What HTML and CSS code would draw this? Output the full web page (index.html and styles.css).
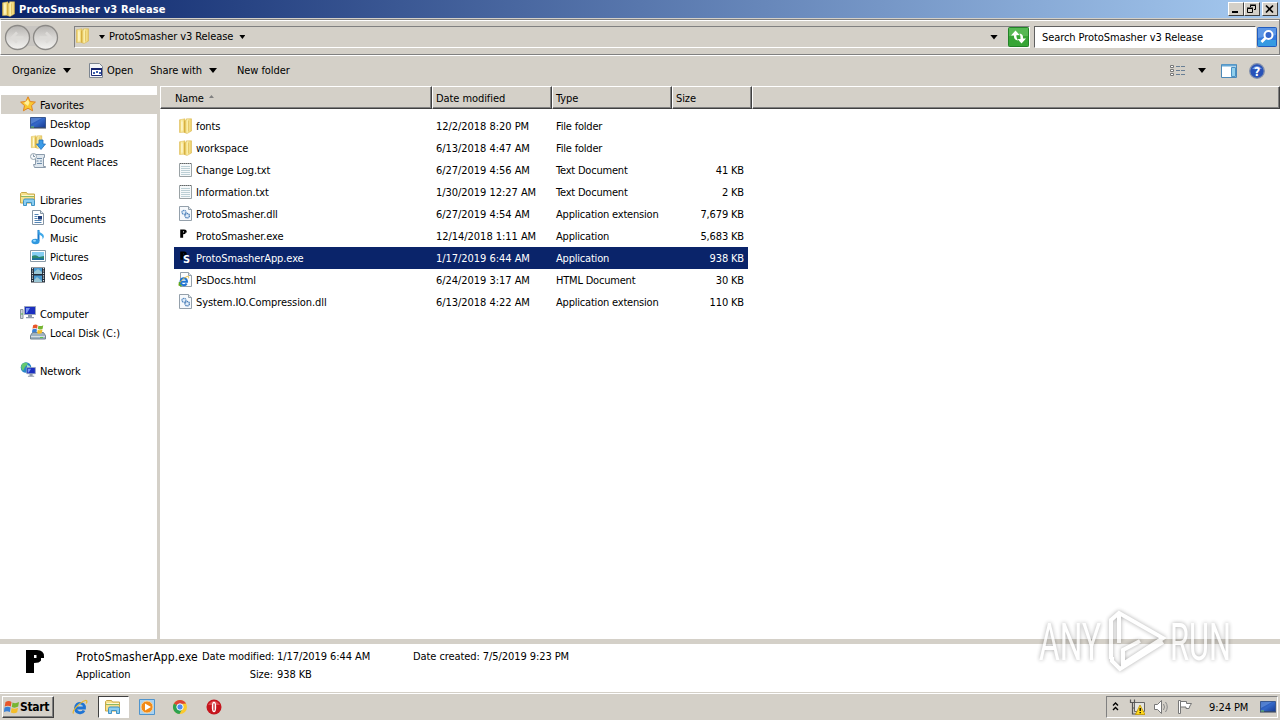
FILE: index.html
```
<!DOCTYPE html>
<html lang="en">
<head>
    <meta charset="UTF-8">
    <meta name="viewport" content="width=device-width, initial-scale=1.0">
    <link rel="stylesheet" href="styles.css">
    <title>ProtoSmasher v3 Release</title>
</head>
<body>
    <!-- shared icons -->
    <svg class="sprite" width="0" height="0">
        <defs>
            <linearGradient id="gold" x1="0" x2="1" y1="0" y2="0">
                <stop offset="0" stop-color="#e6c355"/>
                <stop offset=".4" stop-color="#fbf0ac"/>
                <stop offset="1" stop-color="#ebcb62"/>
            </linearGradient>
            <linearGradient id="screen" x1="0" x2="1" y1="0" y2="1">
                <stop offset="0" stop-color="#1c3d9c"/>
                <stop offset=".5" stop-color="#3468c8"/>
                <stop offset="1" stop-color="#173a90"/>
            </linearGradient>
            <linearGradient id="glass" x1="0" x2="0" y1="0" y2="1">
                <stop offset="0" stop-color="#b5b3b0"/>
                <stop offset=".45" stop-color="#d6d4d1"/>
                <stop offset="1" stop-color="#f4f3f1"/>
            </linearGradient>
        </defs>
        <symbol id="folder" viewBox="0 0 16 16">
            <path d="M1.500 1.800L7 .8v13.400l-5.500.3z" fill="url(#gold)" stroke="#dcb94f" stroke-width=".5"/>
            <path d="M6.500 2.500l2-.5V.8h5V13L9 15.500l-2.500-1z" fill="url(#gold)" stroke="#d5b045" stroke-width=".5"/>
            <path d="M6.800 3v11.500" stroke="#cfa433" stroke-width=".7"/>
            <path d="M10.500 2.500v11" stroke="#d8b34a" stroke-width=".6"/>
            <path d="M4 3.500v9" stroke="#fffade"/>
        </symbol>
        <symbol id="txt" viewBox="0 0 16 16">
            <path d="M1.500 1.500h12v13h-12z" fill="#f6f9fa" stroke="#9aa2a5"/>
            <path d="M2 1.500h11" stroke="#666" stroke-dasharray="1 1"/>
            <path d="M3 4.500h9M3 6.500h9M3 8.500h9M3 10.500h9M3 12.500h9" stroke="#bccfd5"/>
        </symbol>
        <symbol id="dll" viewBox="0 0 16 16">
            <path d="M1.500.5h9l3 3v11h-12z" fill="#f6f9fc" stroke="#94a0ab"/>
            <path d="M10.500.5v3h3" fill="#dde5ec" stroke="#94a0ab"/>
            <circle cx="6" cy="6.300" r="2" fill="#e2eefa" stroke="#5a8cc2" stroke-width="1.300" stroke-dasharray="1.300 .5"/>
            <circle cx="9.200" cy="9.700" r="2.200" fill="#e2eefa" stroke="#4b7db5" stroke-width="1.300" stroke-dasharray="1.300 .5"/>
        </symbol>
        <symbol id="ie" viewBox="0 0 16 16">
            <path d="M4 9h8.500c.3-6-8.500-6.500-9 0-.2 5.500 6.800 6 8.500 2.500" fill="none" stroke="#1f74d4" stroke-width="2.800"/>
            <path d="M5 7.500c1-2.500 4-2.500 5.500-.5" fill="none" stroke="#7cc6f7" stroke-width=".8"/>
            <path d="M1.500 14.500C-.5 12 8 3 13.500 1.500c2-.3 1.500 2 .7 3" fill="none" stroke="#e9b62a" stroke-width="1.200"/>
        </symbol>
        <symbol id="html" viewBox="0 0 16 16">
            <path d="M2.500.5h8l3 3v11h-11z" fill="#fbfcfd" stroke="#94a0ab"/>
            <path d="M10.500.5v3h3" fill="#dde5ec" stroke="#94a0ab"/>
            <use href="#ie" x="0" y="3" width="11.500" height="12"/>
            <path d="M1.500 10v3l2 1" fill="none" stroke="#55a729" stroke-width="1.500"/>
        </symbol>
        <symbol id="p" viewBox="0 0 22 26">
            <path d="M2 2h11q7 0 7 6.500v1.500l-3 0v2.500q-1.500 2.500-7 2.500v10H2zM10 7v3h2.500V7z" fill="#000" fill-rule="evenodd"/>
        </symbol>
        <symbol id="desktop" viewBox="0 0 16 16">
            <path d="M.5 2.500h15v10H.5z" fill="url(#screen)" stroke="#3a5990"/>
            <path d="M1 3h11L1 9z" fill="#6f9fe2" opacity=".6"/>
            <path d="M0 13h16" stroke="#2e3d54"/>
            <path d="M1 12h3" stroke="#6cc45c"/>
        </symbol>
        <symbol id="libs" viewBox="0 0 16 16">
            <path d="M.5 12V2.500l1-1h5l1 1.500h7V12z" fill="#f7e08a" stroke="#c8a849"/>
            <path d="M2 4.500h12" stroke="#fff8d0"/>
            <path d="M1 5.500h13" stroke="#8eb765"/>
            <path d="M3.500 14.500v-5q0-1.500 1.500-1.500h8q1.500 0 1.500 1.500v5h-3v-3h-5v3z" fill="#8bcdf1" stroke="#3f93c4"/>
        </symbol>
        <symbol id="monitor" viewBox="0 0 16 16">
            <path d="M4.500 2.500h11v8h-11z" fill="#1b2fc0" stroke="#99a5bb"/>
            <path d="M6 4h4l-3 5H6z" fill="#7894f2"/>
            <path d="M8 11h4v2H8zM6 13h8v1.300H6z" fill="#8f9aac"/>
        </symbol>
        <symbol id="winflag" viewBox="0 0 16 16">
            <path d="M1.500 3Q5 1 7.500 3L6.800 7.500Q4 5.800.7 7.500z" fill="#e8562a"/>
            <path d="M8.500 3.500q3 1.500 6.500-.5l-.8 4.500q-3.200 2-6.400.5z" fill="#76b531"/>
            <path d="M.5 8.500q3.300-1.700 6.100 0l-.7 4.500q-2.800-1.700-6 0z" fill="#3a80d5"/>
            <path d="M7.600 9q3 1.700 6.400-.3l-.8 4.500q-3 1.900-6.300.3z" fill="#f4bd29"/>
        </symbol>
    </svg>

    <div class="window">
        <div class="titlebar">
            <svg class="icon"><use href="#folder"/></svg>
            <h1>ProtoSmasher v3 Release</h1>
            <div class="win-buttons">
                <button><svg width="14" height="12"><path d="M3 9h6" stroke="#000" stroke-width="2"/></svg></button>
                <button><svg width="14" height="12"><path d="M5.500 4V2.500h5v4H9M5 2h6M2.500 5.500h5v4h-5zM2 5h6" fill="none" stroke="#000"/></svg></button>
                <button class="close"><svg width="14" height="12"><path d="M3 2.500l7 7M10 2.500l-7 7" stroke="#000" stroke-width="1.700"/></svg></button>
            </div>
        </div>

        <div class="navbar">
            <svg class="travel" width="58" height="28">
                <rect x="12" y="3" width="32" height="20" fill="#c9c6c2"/>
                <circle cx="14.500" cy="14.500" r="12" fill="url(#glass)" stroke="#8b8986" stroke-width="1.300"/>
                <circle cx="42.500" cy="14.500" r="12" fill="url(#glass)" stroke="#8b8986" stroke-width="1.300"/>
                <path d="M20.500 14.500h-11M14 9.500l-5 5 5 5" fill="none" stroke="#dddbd8" stroke-width="2.500"/>
                <path d="M36.500 14.500h11M43 9.500l5 5-5 5" fill="none" stroke="#dddbd8" stroke-width="2.500"/>
            </svg>
            <div class="address">
                <svg class="icon"><use href="#folder"/></svg>
                <i class="arrow small"></i>
                <span>ProtoSmasher v3 Release</span>
                <i class="arrow small"></i>
                <i class="arrow drop"></i>
                <svg class="refresh" width="21" height="20">
                    <rect x=".5" y=".5" width="20" height="19" rx="1" fill="#37a536" stroke="#238328"/>
                    <path d="M1 1h19v8H1z" fill="#6ac569" opacity=".6"/>
                    <path d="M10 13.500Q5.500 13 6 8.500H3l4.500-5 4 4.500H8.500q-.5 2.500 1.500 5.500z" fill="#fff"/>
                    <path d="M11.500 6.500q4 .5 3.500 5h3l-4.500 5-4-4.500h3q.5-2.500-1-5.500z" fill="#fff"/>
                </svg>
            </div>
            <div class="search">Search ProtoSmasher v3 Release</div>
            <svg class="search-btn" width="20" height="20">
                <rect x=".5" y=".5" width="19" height="19" rx="1" fill="#3478dc" stroke="#225cbd"/>
                <path d="M1 1h18v7L1 11z" fill="#7eaeef" opacity=".55"/>
                <path d="M1 13h18v6H1z" fill="#36b7e8" opacity=".55"/>
                <circle cx="11.500" cy="8" r="4" fill="#3566cc" stroke="#fff" stroke-width="2"/>
                <path d="M8.500 11L4.500 15" stroke="#fff" stroke-width="2.600"/>
            </svg>
        </div>

        <div class="toolbar">
            <span class="t-organize">Organize</span>
            <i class="arrow"></i>
            <svg class="icon open-icon" viewBox="0 0 16 16">
                <path d="M.5.500h10l3 3v11H.5z" fill="#f3f5f8" stroke="#7c8590"/>
                <path d="M2.500 5.500h10v7h-10z" fill="#fff" stroke="#1d2c78"/>
                <path d="M2 6h11" stroke="#16246c" stroke-width="2"/>
                <path d="M4 9h2v2H4zM7 8h2v2H7zM10 9h2v2h-2z" fill="#3b5fae"/>
            </svg>
            <span class="t-open">Open</span>
            <span class="t-share">Share with</span>
            <i class="arrow"></i>
            <span class="t-new">New folder</span>
            <div class="tools">
                <svg width="16" height="14"><path d="M.5 1.500h3v2h-3zM.5 5.500h3v2h-3zM.5 9.500h3v2h-3z" fill="#fff" stroke="#777"/><path d="M6 2.500h4M11 2.500h4M6 6.500h4M11 6.500h4M6 10.500h4M11 10.500h4" stroke="#697f95"/></svg>
                <i class="arrow"></i>
                <svg class="preview" width="16" height="14"><path d="M.5.5h15v13H.5z" fill="#fff" stroke="#4b88b7"/><path d="M1 1.500h14" stroke="#65a7d5" stroke-width="2"/><path d="M10.500 3.500h4v9h-4z" fill="#91cfec" stroke="#4a91c4"/></svg>
                <svg class="help" width="16" height="16"><circle cx="8" cy="8" r="7.300" fill="#2852b8" stroke="#8290ad" stroke-width="1.300"/><path d="M3 6q5-6 10 0z" fill="#769ee7"/><text x="8" y="12.500" text-anchor="middle">?</text></svg>
            </div>
        </div>

        <div class="main">
            <ul class="sidebar">
                <li class="group active"><svg class="icon" viewBox="0 0 16 16"><path d="M8 .8l2.200 4.700 5.200.6-3.900 3.500 1.100 5.200L8 12.200l-4.600 2.600 1.100-5.200L.6 6.100l5.200-.6z" fill="#f9c832" stroke="#e08423"/><path d="M8 3.500l1.400 3.200L8 10 4 7z" fill="#fff09a"/></svg><span>Favorites</span></li>
                <li><svg class="icon"><use href="#desktop"/></svg><span>Desktop</span></li>
                <li><svg class="icon" viewBox="0 0 16 16"><use href="#folder" width="14" height="16"/><path d="M9 6h4v4h2.500L11 15.500 6.500 10H9z" fill="#3b9be7" stroke="#1f6fbd" stroke-width=".8"/></svg><span>Downloads</span></li>
                <li><svg class="icon" viewBox="0 0 16 16"><path d="M4.500 1.500h10v3h-1v9h2v1h-11l-1-3h2v-7z" fill="#e0e8ef" stroke="#8b9bab"/><path d="M7 5.500h5M6.500 8h2M10 8h2M7 10.500h5" stroke="#6e8ca8"/><circle cx="3.500" cy="3.500" r="3" fill="#f7fafc" stroke="#98a6b0"/><path d="M3.500 1.500v2H5" fill="none" stroke="#657b91" stroke-width=".8"/></svg><span>Recent Places</span></li>
                <li class="gap"></li>
                <li class="group"><svg class="icon"><use href="#libs"/></svg><span>Libraries</span></li>
                <li><svg class="icon" viewBox="0 0 16 16"><path d="M2.500.5h8l3 3v11h-11z" fill="#fff" stroke="#8796a5"/><path d="M10.500.5v3h3" fill="#dce5ed" stroke="#8796a5"/><path d="M4.500 4.500h4M4.500 6.500h3M4.500 8.500h3M4.500 10.500h7M4.500 12.500h7" stroke="#5485b5"/><path d="M8 6h4v3.500H8z" fill="#203f7c"/></svg><span>Documents</span></li>
                <li><svg class="icon" viewBox="0 0 16 16"><path d="M8.500 1v11" stroke="#1976c9" stroke-width="2"/><path d="M8 .5q1 3 4 4 3.500 2.500.5 6 .8-4-4-5z" fill="#3fa8e8"/><ellipse cx="5.500" cy="12.500" rx="4" ry="2.800" fill="#2f98df"/><ellipse cx="4.500" cy="11.800" rx="1.500" ry="1" fill="#9adbff"/></svg><span>Music</span></li>
                <li><svg class="icon" viewBox="0 0 16 16"><path d="M.5 2.500h15v11H.5z" fill="#fff" stroke="#8b9ba8"/><path d="M2 4h12v8H2z" fill="#86cef2"/><path d="M2 8q4-2 7 1l5-1v4H2z" fill="#2d886e"/><path d="M2 10.500q6-1 12 0V12H2z" fill="#1c6fa0"/></svg><span>Pictures</span></li>
                <li><svg class="icon" viewBox="0 0 16 16"><path d="M1 .5h14v15H1z" fill="#222c38"/><path d="M4 1h8v6H4zM4 8.500h8v6.500H4z" fill="#4b9bd2"/><path d="M4 5l4-3 4 3v2H4zM4 13l3-3 5 4v1H4z" fill="#9ac6d5"/><path d="M2.500 1v14M13.500 1v14" stroke="#dbe2e7" stroke-width="1.200" stroke-dasharray="1.200 1.200"/></svg><span>Videos</span></li>
                <li class="gap"></li>
                <li class="group"><svg class="icon" viewBox="0 0 16 16"><use href="#monitor" width="16" height="16" y="-1"/><path d="M.5 4.500h2.500v9H.5z" fill="#cfd6dc" stroke="#8c979f"/><path d="M1 9h2" stroke="#50b64b"/></svg><span>Computer</span></li>
                <li><svg class="icon" viewBox="0 0 16 16"><path d="M2.500 8.500h11l2 3v3.500H.5v-3.500z" fill="#9eb2c1" stroke="#71828f"/><path d="M1 12.500h14" stroke="#d6dee3"/><path d="M10 13.500h3" stroke="#55c64c"/><use href="#winflag" x="2" y="-1" width="12" height="12"/></svg><span>Local Disk (C:)</span></li>
                <li class="gap"></li>
                <li class="group"><svg class="icon" viewBox="0 0 16 16"><circle cx="6" cy="5.500" r="5.300" fill="#2785ca"/><path d="M2 2q4-3 6 0L5 5 3 9Q0 6 2 2z" fill="#65c970"/><path d="M7 3l3 1-1 3H7z" fill="#a6e3d4"/><use href="#monitor" x="3" y="3.500" width="13" height="12.500"/></svg><span>Network</span></li>
            </ul>

            <div class="files">
                <div class="row head">
                    <div class="name">Name <i class="sort"></i></div>
                    <div class="date">Date modified</div>
                    <div class="type">Type</div>
                    <div class="size">Size</div>
                    <div class="rest"></div>
                </div>
                <div class="list">
                    <div class="row"><div class="name"><svg class="icon"><use href="#folder"/></svg>fonts</div><div class="date">12/2/2018 8:20 PM</div><div class="type">File folder</div><div class="size"></div></div>
                    <div class="row"><div class="name"><svg class="icon"><use href="#folder"/></svg>workspace</div><div class="date">6/13/2018 4:47 AM</div><div class="type">File folder</div><div class="size"></div></div>
                    <div class="row"><div class="name"><svg class="icon"><use href="#txt"/></svg>Change Log.txt</div><div class="date">6/27/2019 4:56 AM</div><div class="type">Text Document</div><div class="size">41 KB</div></div>
                    <div class="row"><div class="name"><svg class="icon"><use href="#txt"/></svg>Information.txt</div><div class="date">1/30/2019 12:27 AM</div><div class="type">Text Document</div><div class="size">2 KB</div></div>
                    <div class="row"><div class="name"><svg class="icon"><use href="#dll"/></svg>ProtoSmasher.dll</div><div class="date">6/27/2019 4:54 AM</div><div class="type">Application extension</div><div class="size">7,679 KB</div></div>
                    <div class="row"><div class="name"><svg class="icon" viewBox="0 0 16 16"><use href="#p" x="1.500" y=".5" width="8" height="10"/></svg>ProtoSmasher.exe</div><div class="date">12/14/2018 1:11 AM</div><div class="type">Application</div><div class="size">5,683 KB</div></div>
                    <div class="row selected"><div class="name"><svg class="icon" viewBox="0 0 16 16"><use href="#p" x="1.500" y=".5" width="8" height="10"/><text class="s-mark" x="5" y="12.500">S</text></svg>ProtoSmasherApp.exe</div><div class="date">1/17/2019 6:44 AM</div><div class="type">Application</div><div class="size">938 KB</div></div>
                    <div class="row"><div class="name"><svg class="icon"><use href="#html"/></svg>PsDocs.html</div><div class="date">6/24/2019 3:17 AM</div><div class="type">HTML Document</div><div class="size">30 KB</div></div>
                    <div class="row"><div class="name"><svg class="icon"><use href="#dll"/></svg>System.IO.Compression.dll</div><div class="date">6/13/2018 4:22 AM</div><div class="type">Application extension</div><div class="size">110 KB</div></div>
                </div>
            </div>
        </div>

        <div class="details">
            <svg class="big-p" width="22" height="28"><use href="#p"/></svg>
            <div class="d-name">
                <p class="file-name">ProtoSmasherApp.exe</p>
                <p>Application</p>
            </div>
            <div class="d-labels">
                <p>Date modified:</p>
                <p>Size:</p>
            </div>
            <div class="d-values">
                <p>1/17/2019 6:44 AM</p>
                <p>938 KB</p>
            </div>
            <div class="d-created">
                <p>Date created: <span>7/5/2019 9:23 PM</span></p>
            </div>
        </div>
    </div>

    <div class="taskbar">
        <button class="start"><svg class="icon"><use href="#winflag"/></svg>Start</button>
        <div class="task"><svg class="icon"><use href="#ie"/></svg></div>
        <div class="task open"><svg class="icon"><use href="#libs"/></svg></div>
        <div class="task"><svg class="icon" viewBox="0 0 16 16"><path d="M.5.5h15v15H.5z" fill="#a9d2f1" stroke="#4f94cd"/><circle cx="8" cy="8" r="6" fill="#f28a17" stroke="#fbd39a"/><path d="M6 4.500L12 8l-6 3.500z" fill="#fff"/></svg></div>
        <div class="task"><svg class="icon" viewBox="0 0 16 16"><circle cx="8" cy="8" r="7" fill="#fbc92d"/><path d="M8 8L1.900 4.500A7 7 0 0 1 14.100 4.500L8 5z" fill="#dd4436"/><path d="M1.900 4.500A7 7 0 0 0 7.500 15L10.500 9.500 8 8z" fill="#2da250"/><circle cx="8" cy="8" r="3.200" fill="#4c8bf0" stroke="#fff"/></svg></div>
        <div class="task"><svg class="icon" viewBox="0 0 16 16"><circle cx="8" cy="8" r="7.500" fill="#c5151d"/><path d="M2 6q6-8 12 0z" fill="#e04c50"/><ellipse cx="8" cy="8" rx="2.200" ry="5.300" fill="#fff"/><path d="M8 4.500v7" stroke="#c5151d" stroke-width="1.200"/></svg></div>
        <div class="tray">
            <svg width="7" height="12"><path d="M1 4.500l2.500-2.500L6 4.500M1 9l2.500-2.500L6 9" fill="none" stroke="#000" stroke-width="1.400"/></svg>
            <svg class="net" width="16" height="16"><path d="M5.500 3.500h10v9h-10z" fill="#e4e4e0" stroke="#666"/><path d="M1.500.5v3h4v-3M3.500 4v11h4M3.500 9h2" fill="none" stroke="#555" stroke-width="1.200"/><path d="M11 6l5 9.500H6.500z" fill="#ffd91c" stroke="#bc9200" stroke-width=".8"/><path d="M11.200 9v3M11.200 13v1.300" stroke="#000" stroke-width="1.300"/></svg>
            <svg class="vol" width="17" height="16"><path d="M1.500 5.500h3l4-4v13l-4-4h-3z" fill="#fff" stroke="#777"/><path d="M10.500 5q2 3 0 6M12.500 3q3.500 5 0 10" fill="none" stroke="#888"/></svg>
            <svg class="flag" width="16" height="16"><path d="M1.500 1.500h2v13h-2z" fill="#fff" stroke="#777"/><path d="M3.500 2.500h6v2h5q-2 2.500-2.500 5H9v-1.500H3.500z" fill="#fff" stroke="#777"/></svg>
            <span class="clock">9:24 PM</span>
            <svg class="icon"><use href="#desktop"/></svg>
        </div>
    </div>

    <svg class="watermark" width="220" height="84" viewBox="0 0 220 84">
        <text x="5" y="56" textLength="62" lengthAdjust="spacingAndGlyphs">ANY</text>
        <text x="136" y="56" textLength="61" lengthAdjust="spacingAndGlyphs">RUN</text>
        <path d="M77 55V16l8-7 44 25-40 26V46l17-9M85 9v30M78 53v4l8 8 43-27"/>
    </svg>
</body>
</html>
```

FILE: styles.css
```
* {
  box-sizing: border-box;
}
body {
  margin: 0;
  width: 1280px;
  height: 720px;
  overflow: hidden;
  display: flex;
  flex-direction: column;
  position: relative;
  background-color: #d4d0c8;
  color: #000;
  font-family: "DejaVu Sans Condensed", "DejaVu Sans", sans-serif;
  font-stretch: condensed;
  font-size: 11px;
  letter-spacing: -0.08px;
  white-space: nowrap;
}
h1, p, ul {
  margin: 0;
  padding: 0;
}
svg {
  display: block;
  flex: none;
}
.sprite {
  position: absolute;
}
.icon {
  width: 16px;
  height: 16px;
}
.window {
  display: flex;
  flex-direction: column;
  height: 692px;
}
.arrow {
  width: 8px;
  height: 5px;
  background-color: #000;
  clip-path: polygon(0 0, 100% 0, 50% 100%);
}
.arrow.small {
  width: 6px;
  height: 4px;
}

/* title bar */
.titlebar {
  display: flex;
  align-items: center;
  height: 18px;
  padding: 0 2px 0 1px;
  background: linear-gradient(to right, #0a246a, #a6caf0);
}
.titlebar h1 {
  margin-left: 2px;
  color: #fff;
  font-size: 11px;
  letter-spacing: 0.16px;
}
.win-buttons {
  display: flex;
  margin-left: auto;
}
.win-buttons button {
  width: 16px;
  height: 14px;
  padding: 0;
  background-color: #d4d0c8;
  border: 1px solid;
  border-color: #fff #404040 #404040 #fff;
}
.win-buttons .close {
  margin-left: 2px;
}

/* address bar */
.navbar {
  display: flex;
  height: 36px;
  margin-top: 1px;
  padding: 6px 2px 0 2px;
  border: 1px solid;
  border-color: #808080 #808080 #808080 #fff;
  box-shadow: inset 0 1px #fff, 0 1px #fff;
}
.travel {
  margin: -3px -2px 0 0;
}
.address {
  display: flex;
  align-items: center;
  width: 956px;
  height: 22px;
  margin-left: 15px;
  border: 1px solid;
  border-color: #808080 #fff #fff #808080;
}
.address .icon {
  margin-top: -2px;
}
.address .small {
  margin-left: 8px;
}
.address span {
  margin-left: 4px;
  margin-top: -1px;
}
.address span + .small {
  margin-left: 6px;
}
.address .drop {
  margin-left: auto;
}
.refresh {
  margin-left: 10px;
}
.search {
  width: 222px;
  height: 22px;
  margin-left: 4px;
  padding-left: 7px;
  line-height: 21px;
  background-color: #fff;
  border: 1px solid;
  border-color: #606060 #fff #fff #606060;
}
.search-btn {
  margin: 1px 0 0 1px;
}

/* command bar */
.toolbar {
  display: flex;
  align-items: center;
  height: 31px;
  padding: 0 15px 0 12px;
}
.toolbar .arrow {
  margin-left: 7px;
}
.t-organize {
  width: 44px;
}
.open-icon {
  margin-left: 18px;
}
.t-open {
  width: 43px;
  margin-left: 2px;
}
.t-share {
  width: 52px;
}
.t-new {
  margin-left: 20px;
}
.tools {
  display: flex;
  align-items: center;
  margin-left: auto;
}
.tools .arrow {
  margin-left: 12px;
}
.preview {
  margin-left: 15px;
}
.help {
  margin-left: 12px;
}
.help text {
  fill: #fff;
  font-size: 12px;
  font-weight: bold;
}

/* panes */
.main {
  display: flex;
  height: 553px;
  background-color: #fff;
}
.sidebar {
  width: 160px;
  padding: 9px 0 0 1px;
  border-right: 3px solid #d4d0c8;
  list-style: none;
}
.sidebar li {
  display: flex;
  align-items: center;
  gap: 4px;
  height: 19px;
  padding-left: 29px;
}
.sidebar .group {
  padding-left: 19px;
}
.sidebar .active {
  background-color: #d4d0c8;
}
.sidebar .icon {
  margin-top: -1px;
}
.sidebar span {
  padding-top: 1px;
}
.files {
  flex: 1;
}
.row {
  display: flex;
  align-items: center;
}
.head {
  height: 23px;
  background-color: #d4d0c8;
}
.head div {
  height: 23px;
  line-height: 23px;
  padding-left: 3px;
  border: 1px solid;
  border-color: #fff #404040 #404040 #fff;
  box-shadow: inset -1px -1px #808080;
}
.head .name {
  width: 272px;
  padding-left: 14px;
}
.head .date, .head .type {
  width: 120px;
}
.head .size {
  width: 80px;
}
.head .rest {
  flex: 1;
}
.sort {
  display: inline-block;
  width: 5px;
  height: 3px;
  margin: 0 0 4px 2px;
  background-color: #808080;
  clip-path: polygon(50% 0, 100% 100%, 0 100%);
}
.list {
  width: 574px;
  margin: 6px 0 0 14px;
}
.list .row {
  height: 22px;
}
.list .name {
  display: flex;
  align-items: center;
  gap: 2px;
  width: 262px;
  padding-left: 4px;
}
.list .icon {
  margin-top: -1px;
}
.list .date {
  width: 120px;
  letter-spacing: -0.04px;
}
.list .type {
  width: 120px;
  letter-spacing: -0.2px;
}
.list .size {
  width: 68px;
  text-align: right;
  letter-spacing: -0.15px;
}
.selected {
  background-color: #0a246a;
  color: #fff;
}
.s-mark {
  fill: #fff;
  font-size: 11px;
  font-weight: bold;
}

/* details pane */
.details {
  display: flex;
  height: 53px;
  padding-left: 24px;
  border-top: 5px solid #d4d0c8;
  background-color: #fff;
}
.details p {
  height: 18px;
  line-height: 18px;
}
.details div {
  padding-top: 4px;
}
.big-p {
  margin-top: 3px;
}
.d-name {
  width: 126px;
  margin-left: 30px;
}
.details .file-name {
  font-size: 12px;
  letter-spacing: 0.15px;
}
.d-labels {
  width: 71px;
  text-align: right;
}
.d-values {
  width: 131px;
  padding-left: 4px;
}
.d-created {
  margin-left: 9px;
}

/* taskbar */
.taskbar {
  display: flex;
  height: 28px;
  padding: 3px 2px 2px 2px;
  border-top: 1px solid #d4d0c8;
  box-shadow: inset 0 1px #fff;
}
.start {
  display: flex;
  align-items: center;
  width: 52px;
  height: 22px;
  margin-right: 10px;
  padding: 0 0 0 1px;
  background-color: #d4d0c8;
  border: 1px solid;
  border-color: #fff #404040 #404040 #fff;
  box-shadow: inset -1px -1px #808080;
  font: bold 12px "DejaVu Sans Condensed", "DejaVu Sans", sans-serif;
  letter-spacing: -0.3px;
}
.task {
  display: flex;
  align-items: center;
  justify-content: center;
  width: 31px;
  height: 22px;
  margin-right: 2.5px;
}
.task.open {
  background-color: #fff;
  border: 1px solid;
  border-color: #404040 #fff #fff #404040;
}
.tray {
  display: flex;
  align-items: center;
  width: 172px;
  height: 22px;
  margin-left: auto;
  padding-left: 5px;
  border: 1px solid;
  border-color: #808080 #fff #fff #808080;
}
.net {
  margin-left: 10px;
}
.vol {
  margin-left: 8px;
}
.flag {
  margin-left: 7px;
}
.clock {
  width: 40px;
  margin: 0 11px 0 16px;
}

/* logo laid over the desktop */
.watermark {
  position: absolute;
  left: 1034px;
  top: 604px;
  filter: drop-shadow(0 0 2px rgba(0, 0, 0, 0.45));
  opacity: 0.75;
}
.watermark text {
  fill: #fff;
  font: 51px Roboto, sans-serif;
  letter-spacing: 0;
}
.watermark path {
  fill: none;
  stroke: #fff;
  stroke-width: 4;
}
```
